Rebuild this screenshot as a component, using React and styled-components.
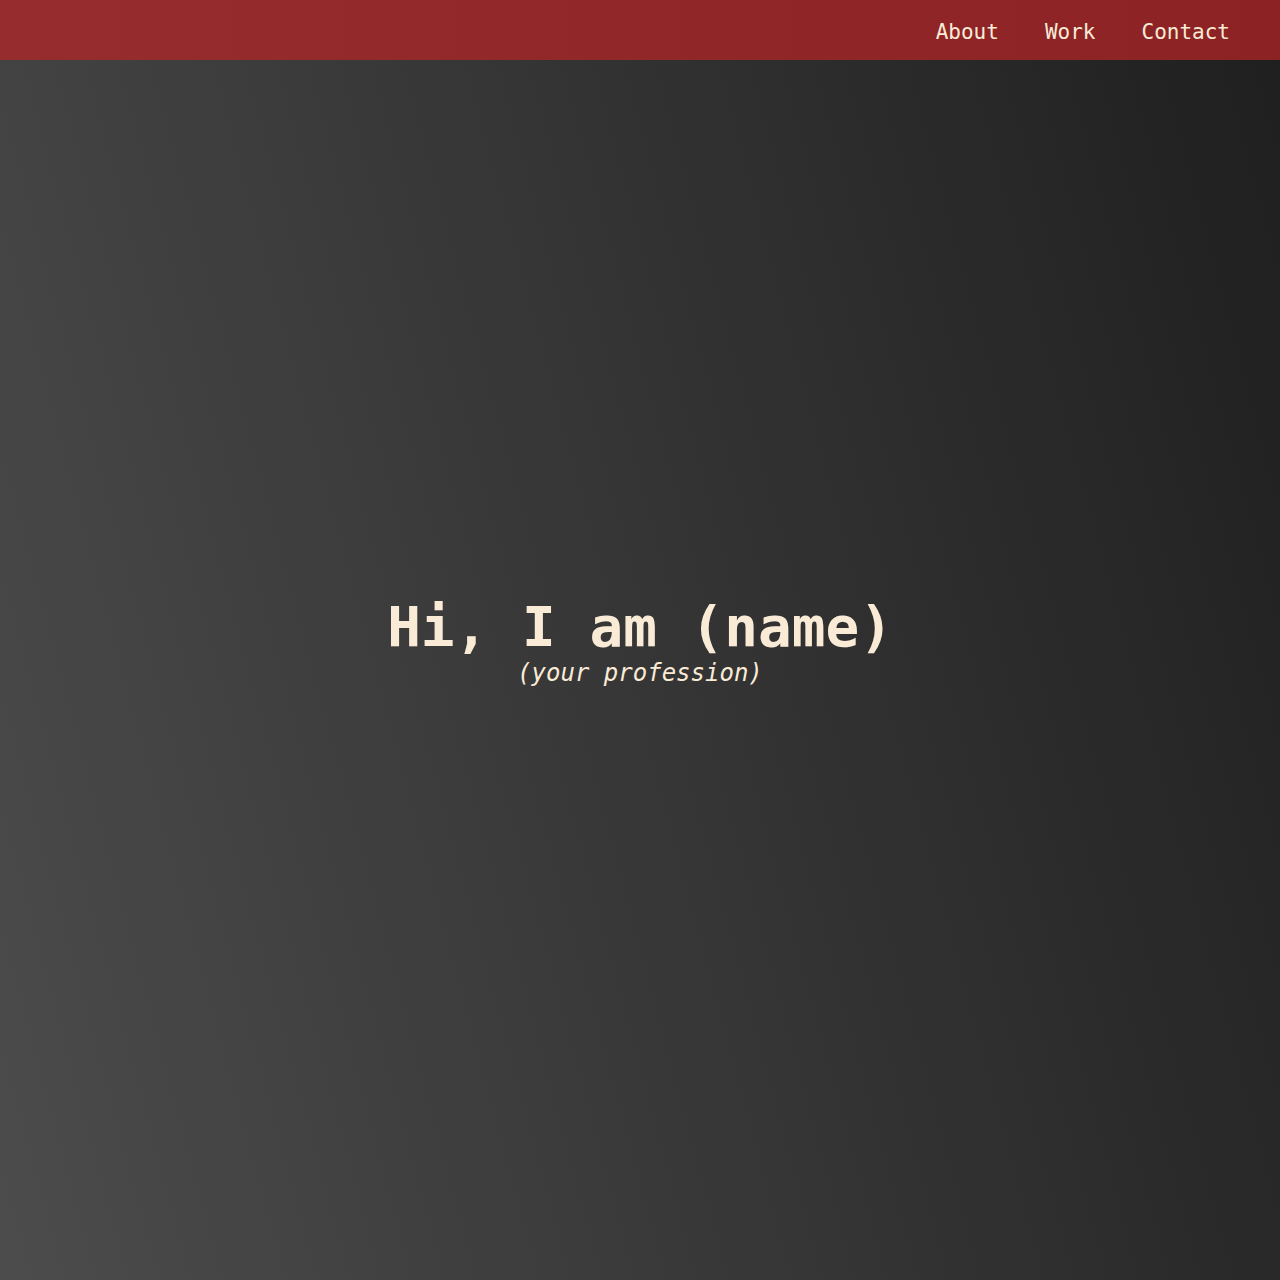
import React from 'react';
import styled, { createGlobalStyle } from 'styled-components';

const GlobalStyle = createGlobalStyle`
  * {
    box-sizing: border-box;
  }
  body {
    margin: 0;
    font-family: "DejaVu Sans Mono", monospace;
    background: linear-gradient(75deg, #4c4c4c, #1f1f1f);
    min-height: 100vh;
    color: #faebd7;
  }
`;

const Header = styled.header`
  position: fixed;
  top: 0;
  left: 0;
  right: 0;
  height: 60px;
  display: flex;
  align-items: center;
  justify-content: flex-end;
  padding: 3px 50px 0;
  background: linear-gradient(to right, #972c2e, #8c2224);
`;

const Nav = styled.nav`
  display: flex;
  gap: 46px;
`;

const NavLink = styled.a`
  color: #faebd7;
  text-decoration: none;
  font-size: 21px;
  cursor: pointer;
`;

const Hero = styled.main`
  height: 100vh;
  display: flex;
  flex-direction: column;
  align-items: center;
  justify-content: center;
`;

const Title = styled.h1`
  margin: 0;
  font-size: 56px;
  font-weight: bold;
`;

const Subtitle = styled.p`
  margin: 0;
  font-size: 24px;
  font-style: italic;
`;

function App() {
  return (
    <>
      <GlobalStyle />
      <Header>
        <Nav>
          <NavLink>About</NavLink>
          <NavLink>Work</NavLink>
          <NavLink>Contact</NavLink>
        </Nav>
      </Header>
      <Hero>
        <Title>Hi, I am (name)</Title>
        <Subtitle>(your profession)</Subtitle>
      </Hero>
    </>
  );
}

export default App;
